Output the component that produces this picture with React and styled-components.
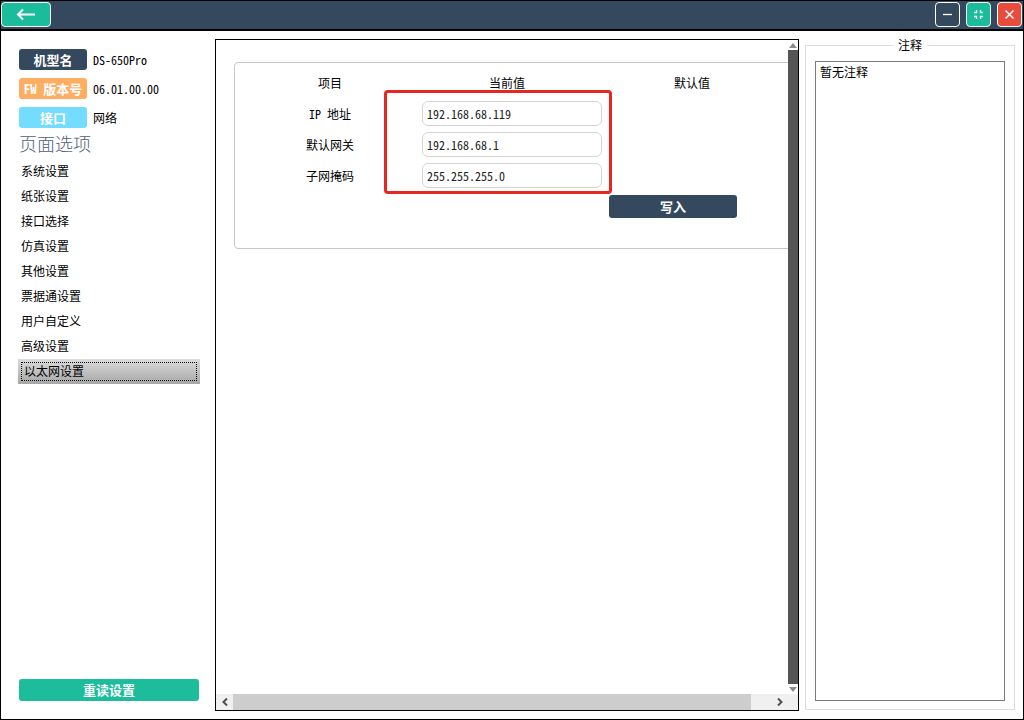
import { useState } from 'react';
import styled, { createGlobalStyle } from 'styled-components';

const GlobalStyle = createGlobalStyle`
  * {
    box-sizing: border-box;
  }

  body {
    margin: 0;
  }

  body, button, input, textarea {
    font-family: 'Noto Sans CJK SC', 'Liberation Sans', sans-serif;
    font-size: 12px;
    line-height: 18px;
    font-feature-settings: 'hwid';
    color: #000;
  }
`;

const Window = styled.div`
  display: flex;
  flex-direction: column;
  height: 100vh;
  border: 1px solid #000;
  background: #fff;
`;

const TitleBar = styled.header`
  display: flex;
  gap: 6px;
  height: 30px;
  padding: 1px 1px 0 0;
  background: #34495e;
  border-bottom: 2px solid #000;
`;

const TitleButton = styled.button`
  display: flex;
  align-items: center;
  justify-content: center;
  width: ${(props) => (props.$wide ? '50px' : '25px')};
  height: 25px;
  padding: 0;
  margin-right: ${(props) => (props.$wide ? 'auto' : '0')};
  border: 1px solid #fff;
  border-radius: 4px;
  background: ${(props) => props.$color};
`;

const Body = styled.div`
  flex: 1;
  min-height: 0;
  display: grid;
  grid-template-columns: 214px minmax(0, 1fr) 224px;
`;

const Sidebar = styled.aside`
  display: flex;
  flex-direction: column;
  padding: 18px 15px 18px 17px;
`;

const InfoList = styled.dl`
  display: grid;
  grid-template-columns: 68px 1fr;
  gap: 8px 6px;
  margin: 0 1px;
  line-height: 21px;
`;

const Badge = styled.dt`
  border-radius: 3px;
  background: ${(props) => props.$color};
  color: #fff;
  font-size: 13px;
  font-weight: bold;
  text-align: center;
  white-space: nowrap;
`;

const InfoValue = styled.dd`
  margin: 0;
`;

const SectionTitle = styled.h2`
  margin: 0 1px;
  color: #4f6078;
  font-size: 18px;
  font-weight: 300;
  line-height: 31px;
`;

const Menu = styled.ul`
  flex: 1;
  margin: 0;
  padding: 0;
  list-style: none;
`;

const MenuItem = styled.button`
  display: block;
  width: 100%;
  height: 25px;
  padding: 0 ${(props) => (props.$active ? '6px' : '3px')} 2px;
  border: none;
  background: ${(props) =>
    props.$active ? 'linear-gradient(#dcdcdc, #a6a6a6)' : 'transparent'};
  outline: ${(props) => (props.$active ? '1px dotted #000' : 'none')};
  outline-offset: -4px;
  text-align: left;
`;

const ActionButton = styled.button`
  height: ${(props) => props.$height};
  padding: 0;
  border: none;
  border-radius: 3px;
  background: ${(props) => props.$color};
  color: #fff;
  font-size: 13px;
  font-weight: bold;
`;

const ReloadButton = styled(ActionButton)`
  margin: 0 1px;
`;

const WriteButton = styled(ActionButton)`
  display: block;
  width: 128px;
`;

const ScrollPane = styled.main`
  display: grid;
  grid-template: minmax(0, 1fr) 16px / minmax(0, 1fr) 10px;
  margin: 8px 0;
  border: 1px solid #000;
`;

const Viewport = styled.div`
  overflow: hidden;
`;

const Content = styled.div`
  min-width: 594px;
  padding: 22px 18px;
`;

const Group = styled.section`
  min-height: 187px;
  padding: 4px 3px;
  border: 1px solid #c8c8c8;
  border-radius: 4px;
`;

const TableWrap = styled.div`
  position: relative;
`;

const Table = styled.table`
  width: 544px;
  border-collapse: collapse;
  table-layout: fixed;

  th, td {
    height: 31px;
    padding: 0;
    font-weight: normal;
    text-align: center;
  }
`;

const CurrentHead = styled.th`
  && {
    padding-right: 10px;
  }
`;

const WriteCell = styled.td`
  && {
    padding-left: 7px;
  }
`;

const TextBox = styled.input`
  display: block;
  width: 100%;
  height: 25px;
  padding: 0 4px 1px;
  border: 1px solid #d5d5d5;
  border-radius: 6px;
  background: #fff;
  color: #222;
  outline: none;
`;

const Highlight = styled.div`
  position: absolute;
  top: 23px;
  left: 146px;
  width: 228px;
  height: 104px;
  border: 3px solid #e6261f;
  border-radius: 4px;
  pointer-events: none;
`;

const VerticalBar = styled.div`
  display: flex;
  flex-direction: column;
`;

const HorizontalBar = styled.div`
  grid-column: 1 / -1;
  display: flex;
  padding-right: 10px;
  background: #f0f0f0;
`;

const ScrollButton = styled.button`
  display: flex;
  align-items: center;
  justify-content: center;
  flex: none;
  width: ${(props) => (props.$vertical ? '10px' : '17px')};
  height: ${(props) => (props.$vertical ? '10px' : '16px')};
  padding: 0;
  border: none;
  background: transparent;
`;

const Track = styled.div`
  flex: 1;
  background: ${(props) => props.$color};
  margin-right: ${(props) => props.$rest || '0'};
`;

const Notes = styled.aside`
  display: flex;
  padding: 5px 8px 9px 6px;
`;

const NotesFrame = styled.fieldset`
  flex: 1;
  display: flex;
  min-width: 0;
  margin: 0;
  padding: 7px 9px 8px;
  border: 1px solid #dcdcdc;

  legend {
    margin: 0 auto;
    padding: 0 5px;
  }
`;

const NotesText = styled.textarea`
  flex: 1;
  min-width: 0;
  padding: 1px 4px;
  border: 1px solid #7a7a7a;
  border-radius: 0;
  outline: none;
  resize: none;
`;

const menu = [
  '系统设置',
  '纸张设置',
  '接口选择',
  '仿真设置',
  '其他设置',
  '票据通设置',
  '用户自定义',
  '高级设置',
  '以太网设置',
];

const info = [
  { name: '机型名', value: 'DS-650Pro', color: '#34495e' },
  { name: 'FW 版本号', value: '06.01.00.00', color: '#ffad62' },
  { name: '接口', value: '网络', color: '#74dcff' },
];

const fields = [
  { id: 'ip', label: 'IP 地址', value: '192.168.68.119' },
  { id: 'gateway', label: '默认网关', value: '192.168.68.1' },
  { id: 'mask', label: '子网掩码', value: '255.255.255.0' },
];

function Icon({ width, height, d, weight = 2, color = '#fff' }) {
  return (
    <svg width={width} height={height} viewBox={`0 0 ${width} ${height}`} aria-hidden="true">
      <path d={d} fill="none" stroke={color} strokeWidth={weight} />
    </svg>
  );
}

function Arrow({ d }) {
  return (
    <svg width="8" height="5" viewBox="0 0 8 5" aria-hidden="true">
      <path d={d} fill="#8c8c8c" />
    </svg>
  );
}

export default function App() {
  const [page, setPage] = useState('以太网设置');

  return (
    <>
      <GlobalStyle />
      <Window>
        <TitleBar>
          <TitleButton $wide $color="#1abc9c" aria-label="返回">
            <Icon width={20} height={13} d="M19 6.5H2M7 1.5L2 6.5L7 11.5" />
          </TitleButton>
          <TitleButton $color="#34495e" aria-label="最小化">
            <Icon width={11} height={11} d="M1 5.5H10" weight={1.3} />
          </TitleButton>
          <TitleButton $color="#1abc9c" aria-label="还原">
            <Icon
              width={11}
              height={11}
              d="M1 3.5H3.5V1M7.5 1V3.5H10M1 7.5H3.5V10M7.5 10V7.5H10"
              weight={1.3}
            />
          </TitleButton>
          <TitleButton $color="#e74c3c" aria-label="关闭">
            <Icon width={11} height={11} d="M1.5 1.5L9.5 9.5M9.5 1.5L1.5 9.5" weight={1.5} />
          </TitleButton>
        </TitleBar>

        <Body>
          <Sidebar>
            <InfoList>
              {info.map((item) => [
                <Badge key={item.name} $color={item.color}>{item.name}</Badge>,
                <InfoValue key={item.value}>{item.value}</InfoValue>,
              ])}
            </InfoList>
            <SectionTitle>页面选项</SectionTitle>
            <Menu>
              {menu.map((name) => (
                <li key={name}>
                  <MenuItem $active={name === page} onClick={() => setPage(name)}>
                    {name}
                  </MenuItem>
                </li>
              ))}
            </Menu>
            <ReloadButton $color="#1dbd9b" $height="22px">重读设置</ReloadButton>
          </Sidebar>

          <ScrollPane>
            <Viewport>
              <Content>
                <Group>
                  <TableWrap>
                    <Table>
                      <colgroup>
                        <col width="184" />
                        <col width="180" />
                        <col width="180" />
                      </colgroup>
                      <thead>
                        <tr>
                          <th>项目</th>
                          <CurrentHead>当前值</CurrentHead>
                          <th>默认值</th>
                        </tr>
                      </thead>
                      <tbody>
                        {fields.map((field) => (
                          <tr key={field.id}>
                            <th>
                              <label htmlFor={field.id}>{field.label}</label>
                            </th>
                            <td>
                              <TextBox id={field.id} defaultValue={field.value} />
                            </td>
                            <td />
                          </tr>
                        ))}
                        <tr>
                          <td />
                          <td />
                          <WriteCell>
                            <WriteButton $color="#34495e" $height="23px">写入</WriteButton>
                          </WriteCell>
                        </tr>
                      </tbody>
                    </Table>
                    <Highlight />
                  </TableWrap>
                </Group>
              </Content>
            </Viewport>
            <VerticalBar>
              <ScrollButton $vertical aria-label="向上滚动">
                <Arrow d="M0 5L4 0L8 5Z" />
              </ScrollButton>
              <Track $color="#555" />
              <ScrollButton $vertical aria-label="向下滚动">
                <Arrow d="M0 0L4 5L8 0Z" />
              </ScrollButton>
            </VerticalBar>
            <HorizontalBar>
              <ScrollButton aria-label="向左滚动">
                <Icon width={6} height={8} d="M5 0.5L1.5 4L5 7.5" color="#505050" />
              </ScrollButton>
              <Track $color="#cdcdcd" $rest="20px" />
              <ScrollButton aria-label="向右滚动">
                <Icon width={6} height={8} d="M1 0.5L4.5 4L1 7.5" color="#505050" />
              </ScrollButton>
            </HorizontalBar>
          </ScrollPane>

          <Notes>
            <NotesFrame>
              <legend>注释</legend>
              <NotesText aria-label="注释" defaultValue="暂无注释" />
            </NotesFrame>
          </Notes>
        </Body>
      </Window>
    </>
  );
}
